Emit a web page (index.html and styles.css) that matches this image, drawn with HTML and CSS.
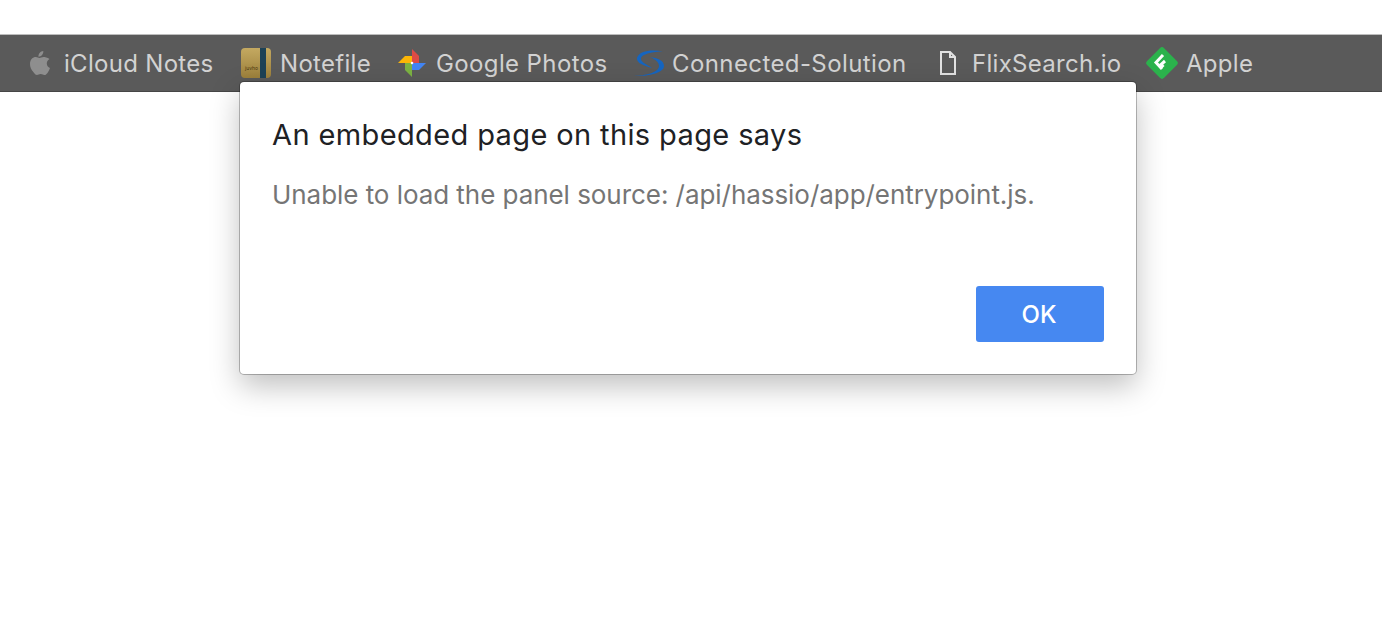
FILE: index.html
```html
<!DOCTYPE html>
<html lang="en">
<head>
    <meta charset="UTF-8">
    <title>Bookmarks</title>
    <link rel="stylesheet" href="styles.css">
</head>
<body>
    <div class="bookmarks">
        <a class="bookmark bookmark-icloud">
            <svg class="icon" width="24" height="26" viewBox="0 0 24 26">
                <path fill="#8e8e8e" d="M16.3 1c.2 1.800-.5 3.100-1.300 4.100-.9 1-2.200 1.800-3.500 1.700-.2-1.600.5-3 1.300-4C13.700 1.800 15.100 1.100 16.300 1zM22.500 8.900c-1.900 1.200-2.700 2.700-2.700 4.500 0 2.100 1.200 3.700 3.200 4.600-.5 1.500-1.200 3-2.200 4.400-1 1.400-2 2.600-3.400 2.600-1.400 0-1.900-.9-3.700-.9-1.800 0-2.400.9-3.700.9-1.400 0-2.400-1.300-3.500-2.800C4.100 20.100 3 17 3 14.100 3 9.500 5.900 7 8.800 7c1.500 0 2.800 1 3.700 1 .9 0 2.300-1 4-1 1.200 0 4 .4 6 1.900z"/>
            </svg>
            iCloud Notes
        </a>
        <a class="bookmark bookmark-notefile">
            <svg class="icon" width="30" height="30" viewBox="0 0 30 30">
                <defs>
                    <linearGradient id="notefile-cover" x1="0" y1="0" x2="0" y2="1">
                        <stop offset="0" stop-color="#c4a961"/>
                        <stop offset="1" stop-color="#9c803b"/>
                    </linearGradient>
                </defs>
                <rect width="30" height="30" rx="4" fill="url(#notefile-cover)"/>
                <rect x="19" width="6" height="30" fill="#1d4256"/>
                <text x="4" y="22" class="notefile-label">juvho</text>
            </svg>
            Notefile
        </a>
        <a class="bookmark bookmark-photos">
            <svg class="icon" width="28" height="28" viewBox="0 0 28 28">
                <path fill="#dd4b45" d="M14 14V0l7 7v7z"/>
                <path fill="#4285f4" d="M14 14h14l-7 7h-7z"/>
                <path fill="#7cb342" d="M14 14v14l-7-7v-7z"/>
                <path fill="#fbb507" d="M14 14H0l7-7h7z"/>
                <circle cx="14" cy="14" r="1.300" fill="#fff"/>
            </svg>
            Google Photos
        </a>
        <a class="bookmark bookmark-connected">
            <svg class="icon" width="30" height="26" viewBox="4 6 30 26">
                <path fill="#1565c0" d="M33 7.500C22 5 9 6.500 7 14c-1 5 7 8 15 10-6-4-12-6-11-10 1-4 12-6.500 22-6.500z"/>
                <path fill="#1565c0" d="M20 13c7 1 14 3 14 9 0 7-17 11-30 9.500 12 .5 25-3.500 25-9.500 0-4-4-7-9-9z"/>
            </svg>
            Connected-Solution
        </a>
        <a class="bookmark bookmark-flix">
            <svg class="icon" width="18" height="24" viewBox="0 0 18 24">
                <path fill="none" stroke="#e2e2e2" stroke-width="2" d="M2 1h9l5 5v17H2zM11 1v5h5"/>
            </svg>
            FlixSearch.io
        </a>
        <a class="bookmark bookmark-apple">
            <svg class="icon" width="32" height="32" viewBox="0 0 32 32">
                <rect x="4" y="4" width="24" height="24" rx="3" fill="#2bb24c" transform="rotate(45 16 16)"/>
                <path fill="none" stroke="#fff" stroke-width="3" d="M17 8l-7 7.500 6 6.500M19 14l-4 3.500 2.500 2.500"/>
            </svg>
            Apple
        </a>
    </div>

    <div class="dialog">
        <h1 class="dialog-title">An embedded page on this page says</h1>
        <p class="dialog-message">Unable to load the panel source: /api/hassio/app/entrypoint.js.</p>
        <div class="dialog-actions">
            <button class="dialog-ok">OK</button>
        </div>
    </div>
</body>
</html>
```

FILE: styles.css
```css
html, body {
    height: 100%;
}

body {
    margin: 0;
    padding-top: 34px;
    box-sizing: border-box;
    background-color: #fff;
    font-family: Inter, "Noto Sans", sans-serif;
    overflow: hidden;
}

.bookmarks {
    height: 58px;
    box-sizing: border-box;
    display: flex;
    align-items: center;
    padding-left: 27px;
    background-color: #5a5a5a;
    border-top: 1px solid #bdbdbd;
    border-bottom: 1px solid #464646;
}

.bookmark {
    display: flex;
    align-items: center;
    color: #d2d2d2;
    font-size: 24px;
    letter-spacing: 0.3px;
    white-space: nowrap;
}

.icon {
    flex-shrink: 0;
    margin-right: 10px;
}

.bookmark-icloud { width: 214px; }
.bookmark-notefile { width: 157px; }
.bookmark-photos { width: 236px; }
.bookmark-connected { width: 305px; letter-spacing: 0.4px; }
.bookmark-flix { width: 207px; }

.bookmark-icloud .icon { margin-right: 13px; }
.bookmark-notefile .icon { margin-right: 9px; }
.bookmark-photos { letter-spacing: 0.38px; }
.bookmark-connected .icon { margin-right: 8px; }
.bookmark-flix .icon { margin-right: 15px; }
.bookmark-apple .icon { margin-right: 8px; }

.notefile-label {
    font-size: 5px;
    letter-spacing: 0;
    fill: #4a3710;
}

.dialog {
    position: absolute;
    top: 82px;
    left: 240px;
    width: 896px;
    height: 292px;
    box-sizing: border-box;
    padding: 37px 32px 32px;
    display: flex;
    flex-direction: column;
    background-color: #fff;
    border-radius: 4px;
    box-shadow: 0 0 0 1px rgba(0, 0, 0, 0.25), 0 12px 30px rgba(0, 0, 0, 0.25);
}

.dialog-title {
    margin: 0;
    font-size: 29px;
    font-weight: 400;
    letter-spacing: 0.38px;
    line-height: 32px;
    color: #202124;
}

.dialog-message {
    margin: 28px 0 0;
    font-size: 26px;
    letter-spacing: -0.05px;
    line-height: 32px;
    color: #757575;
}

.dialog-actions {
    margin-top: auto;
    display: flex;
    justify-content: flex-end;
}

.dialog-ok {
    width: 128px;
    height: 56px;
    padding: 0 2px 0 0;
    border: none;
    border-radius: 3px;
    background-color: #4688f1;
    color: #fff;
    font-family: inherit;
    font-size: 24px;
    font-weight: 500;
}
```
